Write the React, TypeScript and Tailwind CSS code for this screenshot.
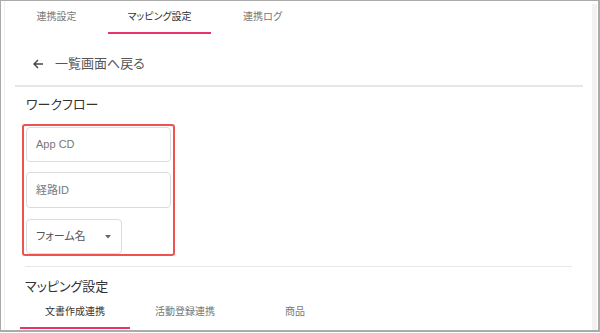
import React from "react";

const font =
  "font-['Liberation_Sans','Noto_Sans_CJK_JP',sans-serif] [font-feature-settings:'palt']";

function Tab({ label, active, width }: { label: string; active?: boolean; width: string }) {
  return (
    <div className={`${width} h-[33px] flex flex-col`}>
      <div
        className={`flex-1 flex items-center justify-center text-[10px] ${
          active ? "text-[#333]" : "text-[#777]"
        }`}
      >
        {label}
      </div>
      <div className={`h-[2px] ${active ? "bg-[#e8336b]" : "bg-transparent"}`} />
    </div>
  );
}

function TextInput({ placeholder }: { placeholder: string }) {
  return (
    <div className="h-[36px] w-[145px] border border-[#dcdcdc] rounded-[4px] flex items-center pl-[9px] text-[11px] text-[#777]">
      {placeholder}
    </div>
  );
}

export default function App() {
  return (
    <div
      className={`${font} w-[600px] h-[332px] bg-white border-l border-t border-r-2 border-b-2 border-[#ababab] flex overflow-hidden`}
    >
      <div className="flex-1 pl-[3px]">
        <div className="h-full border-l border-[#f0f0f0] flex flex-col">
          {/* top tabs */}
          <div className="flex">
            <Tab label="連携設定" width="w-[103px]" />
            <Tab label="マッピング設定" width="w-[103px]" active />
            <Tab label="連携ログ" width="w-[103px]" />
          </div>

          {/* back link */}
          <div className="mt-[20px] h-[20px] flex items-center ml-[28px] text-[13px] text-[#555]">
            <svg width="11" height="10" viewBox="0 0 11 10" fill="none" className="mr-[11px]">
              <path d="M10 5H1.5M5 1L1 5l4 4" stroke="#444" strokeWidth="1.4" />
            </svg>
            一覧画面へ戻る
          </div>
          <div className="mt-[11px] ml-[10px] w-[568px] h-[2px] bg-[#e6e6e6]" />

          {/* workflow */}
          <div className="mt-[9px] ml-[21px] h-[18px] flex items-center text-[13px] text-[#333]">
            ワークフロー
          </div>
          <div className="mt-[10px] ml-[17px] w-[153px] h-[132px] border-2 border-[#f05252] rounded-[3px] overflow-hidden pt-[1px] pl-[2px] flex flex-col">
            <TextInput placeholder="App CD" />
            <div className="mt-[10px]">
              <TextInput placeholder="経路ID" />
            </div>
            <div className="mt-[11px] h-[36px] w-[96px] border border-[#dcdcdc] rounded-[4px] flex items-center justify-between pl-[9px] pr-[10px] text-[11px] text-[#555]">
              フォーム名
              <svg width="6" height="4" viewBox="0 0 6 4">
                <path d="M0 0h6L3 3.5z" fill="#666" />
              </svg>
            </div>
          </div>

          <div className="mt-[10px] ml-[20px] w-[547px] h-[1px] bg-[#e8e8e8]" />

          {/* mapping */}
          <div className="mt-[11px] ml-[20px] h-[18px] flex items-center text-[13px] text-[#333]">
            マッピング設定
          </div>
          <div className="ml-[15px] flex">
            <Tab label="文書作成連携" width="w-[110px]" active />
            <Tab label="活動登録連携" width="w-[110px]" />
            <Tab label="商品" width="w-[110px]" />
          </div>
        </div>
      </div>
      <div className="w-[5px] mt-[3px] bg-[#f2f2f2]" />
      <div className="w-[1px]" />
    </div>
  );
}
